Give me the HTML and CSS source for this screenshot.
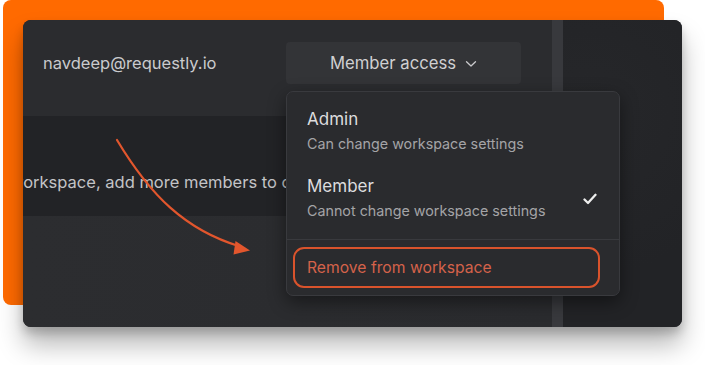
FILE: index.html
```html
<!DOCTYPE html>
<html>
<head>
<meta charset="utf-8">
<link rel="stylesheet" href="styles.css">
</head>
<body>
<div class="stage">
  <div class="backdrop"></div>
  <div class="card">
    <div class="main">
      <div class="row-top">
        <span class="email">navdeep@requestly.io</span>
        <button class="access-btn">Member access
          <svg class="chev" width="12" height="8" viewBox="0 0 12 8"><path d="M1.5 1.8 L6 6 L10.5 1.8" fill="none" stroke="#c9c9cc" stroke-width="1.3" stroke-linecap="round" stroke-linejoin="round"/></svg>
        </button>
      </div>
      <div class="band"><span class="band-text">workspace, add more members to collaborate on rules</span></div>
      <div class="bottom"></div>
    </div>
    <div class="scrollbar"></div>
    <div class="side"></div>

    <div class="dropdown">
      <div class="item">
        <div class="item-text">
          <div class="item-title">Admin</div>
          <div class="item-desc">Can change workspace settings</div>
        </div>
      </div>
      <div class="item item-member">
        <div class="item-text">
          <div class="item-title">Member</div>
          <div class="item-desc">Cannot change workspace settings</div>
        </div>
        <svg class="check" width="14" height="12" viewBox="0 0 14 12"><path d="M1.5 6.5 L5 10 L12.5 1.8" fill="none" stroke="#eeeeee" stroke-width="2.3" stroke-linecap="round" stroke-linejoin="round"/></svg>
      </div>
      <div class="divider"></div>
      <div class="remove">Remove from workspace</div>
    </div>
  </div>
  <svg class="arrow" width="705" height="365" viewBox="0 0 705 365">
    <path d="M117 140 C 150 195, 185 230, 240 246.5" fill="none" stroke="#e2562d" stroke-width="2.2" stroke-linecap="round"/>
    <polygon points="250,250.5 235.5,241 233.5,254.5" fill="#e2562d"/>
  </svg>
</div>
</body>
</html>
```

FILE: styles.css
```css
* { box-sizing: border-box; }
html, body { margin: 0; padding: 0; background: #ffffff; }
body { font-family: Inter, Roboto, "Noto Sans", Arial, sans-serif; }

.stage {
  position: relative;
  width: 705px;
  height: 365px;
  overflow: hidden;
  padding-top: 20px;
  padding-left: 23px;
}

.backdrop {
  position: absolute;
  left: 3px;
  top: 0;
  width: 661px;
  height: 305px;
  background: #ff6a00;
  border-radius: 8px;
}

.card {
  position: relative;
  width: 659px;
  height: 307px;
  border-radius: 8px;
  overflow: hidden;
  display: flex;
  background: #232427;
  box-shadow: 0 18px 26px rgba(0, 0, 0, 0.28), 0 6px 10px rgba(0, 0, 0, 0.18);
}

.main {
  width: 529px;
  display: flex;
  flex-direction: column;
}

.row-top {
  height: 96px;
  background: #2b2c2f;
  display: flex;
  align-items: flex-start;
  justify-content: space-between;
  padding: 22px 31px 0 20px;
}

.email {
  line-height: 42px;
  font-size: 16.5px;
  color: #cacacd;
}

.access-btn {
  width: 235px;
  height: 42px;
  border: none;
  border-radius: 4px;
  background: #333437;
  color: #d0d0d2;
  font-family: inherit;
  font-size: 16.7px;
  display: flex;
  align-items: center;
  justify-content: center;
  gap: 9px;
  padding: 0;
}

.chev { display: block; margin-top: 1px; }

.band {
  height: 100px;
  background: #222326;
  overflow: hidden;
  white-space: nowrap;
  padding-top: 52px;
}

.band-text {
  display: block;
  margin-left: -13px;
  font-size: 16.5px;
  line-height: 28px;
  color: #c4c4c7;
}

.bottom {
  flex: 1;
  background: linear-gradient(90deg, #2c2d30 0%, #2a2b2e 100%);
}

.scrollbar {
  width: 11px;
  background: #38393d;
}

.side {
  flex: 1;
  background: radial-gradient(circle at 20% 30%, #26272a 0%, #222326 70%);
}

.dropdown {
  position: absolute;
  left: 263px;
  top: 71px;
  width: 334px;
  height: 205px;
  background: #2a2b2e;
  border: 1px solid #393a3e;
  border-radius: 7px;
  box-shadow: 0 6px 18px rgba(0, 0, 0, 0.45);
  display: flex;
  flex-direction: column;
}

.item {
  display: flex;
  align-items: center;
  justify-content: space-between;
  padding: 16px 22px 0 20px;
}

.item-member { padding-top: 20px; }

.item-title {
  font-size: 17px;
  line-height: 22px;
  color: #dcdcde;
}

.item-desc {
  margin-top: 3px;
  font-size: 14.3px;
  line-height: 22px;
  color: #a4a4a7;
}

.check { display: block; margin-top: 0; }

.divider {
  height: 1px;
  background: #393a3e;
  margin-top: 17px;
}

.remove {
  margin: 7px 19px 0 6px;
  height: 41px;
  border: 2px solid #d9532c;
  border-radius: 11px;
  display: flex;
  align-items: center;
  padding-left: 12px;
  font-size: 15.7px;
  color: #d4624a;
}

.arrow {
  position: absolute;
  left: 0;
  top: 0;
  pointer-events: none;
}
```
